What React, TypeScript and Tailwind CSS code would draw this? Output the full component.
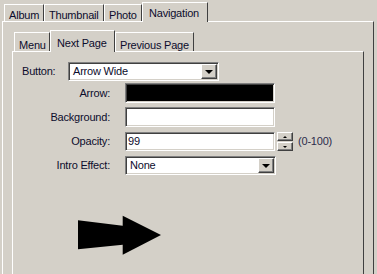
import React from 'react';

const FACE = 'bg-[#d4d0c8]';
const SUNKEN =
  'border border-t-[#808080] border-l-[#808080] border-b-white border-r-white shadow-[inset_1px_1px_0_#404040,inset_-1px_-1px_0_#d4d0c8]';
const RAISED =
  'border border-t-white border-l-white border-b-[#404040] border-r-[#404040] shadow-[inset_-1px_-1px_0_#808080]';

function DownTriangle() {
  return <div className="h-0 w-0 border-x-[4px] border-t-[4px] border-x-transparent border-t-black" />;
}

function Tab({ label, w, selected, big }: { label: string; w: number; selected?: boolean; big?: boolean }) {
  if (selected) {
    return (
      <div
        className={`relative z-10 -mb-px flex items-start border-l border-t border-r border-l-white border-t-white border-r-[#404040] ${FACE} ${
          big ? 'h-[20px] pt-[4px]' : 'h-[22px] pt-[6px]'
        } pl-[6px]`}
        style={{ width: w }}
      >
        {label}
      </div>
    );
  }
  return (
    <div
      className={`flex items-start border-l border-t border-r border-l-white border-t-white border-r-[#404040] ${
        big ? 'h-[17px] pt-[4px]' : 'h-[19px] pt-[6px]'
      } pl-[4px]`}
      style={{ width: w }}
    >
      {label}
    </div>
  );
}

function Dropdown({ value, w }: { value: string; w: number }) {
  return (
    <div className={`flex h-[19px] items-center bg-white ${SUNKEN} p-[1px]`} style={{ width: w }}>
      <span className="flex-1 pl-[3px]">{value}</span>
      <div className={`flex h-[15px] w-[16px] items-center justify-center ${FACE} ${RAISED}`}>
        <DownTriangle />
      </div>
    </div>
  );
}

export default function App() {
  return (
    <div
      className={`flex h-[274px] w-[377px] flex-col overflow-hidden ${FACE} text-[11px] leading-[13px] tracking-[-0.2px] text-[#0c0c2c]`}
      style={{ fontFamily: '"Liberation Sans", Arial, sans-serif' }}
    >
      {/* outer tabs */}
      <div className="flex h-[21px] items-end pl-[4px]">
        <Tab big label="Album" w={40} />
        <Tab big label="Thumbnail" w={60} />
        <Tab big label="Photo" w={38} />
        <Tab big selected label="Navigation" w={66} />
      </div>

      <div className="ml-[2px] flex w-[372px] flex-1 flex-col border-l border-t border-r border-l-white border-t-white border-r-[#404040] pl-[9px] pt-[8px]">
        {/* inner tabs */}
        <div className="flex h-[21px] items-end pl-[2px]">
          <Tab label="Menu" w={36} />
          <Tab selected label="Next Page" w={65} />
          <Tab label="Previous Page" w={79} />
        </div>

        <div className="flex w-[352px] flex-1 flex-col border-l border-t border-r border-l-white border-t-white border-r-[#404040] pl-[9px] pt-[10px]">
          <div className="flex items-center">
            <span className="w-[46px]">Button:</span>
            <Dropdown value="Arrow Wide" w={151} />
          </div>

          <div className="mt-[2px] flex items-center">
            <span className="w-[88px] text-right">Arrow:</span>
            <div className={`ml-[15px] h-[20px] w-[150px] bg-black ${SUNKEN}`} />
          </div>

          <div className="mt-[4px] flex items-center">
            <span className="w-[88px] text-right">Background:</span>
            <div className={`ml-[15px] h-[20px] w-[150px] bg-white ${SUNKEN}`} />
          </div>

          <div className="mt-[5px] flex items-center">
            <span className="w-[88px] text-right">Opacity:</span>
            <div className={`ml-[15px] flex h-[19px] w-[150px] items-center bg-white pl-[2px] ${SUNKEN}`}>99</div>
            <div className="ml-[2px] flex h-[19px] w-[16px] flex-col">
              <div className={`flex h-[9px] items-center justify-center ${FACE} ${RAISED}`}>
                <div className="h-0 w-0 border-x-[2px] border-b-[2px] border-x-transparent border-b-black" />
              </div>
              <div className={`mt-px flex h-[9px] items-center justify-center ${FACE} ${RAISED}`}>
                <div className="h-0 w-0 border-x-[2px] border-t-[2px] border-x-transparent border-t-black" />
              </div>
            </div>
            <span className="ml-[5px] text-[#2c2c4c]">(0-100)</span>
          </div>

          <div className="mt-[5px] flex items-center">
            <span className="w-[88px] text-right">Intro Effect:</span>
            <div className="ml-[15px]">
              <Dropdown value="None" w={151} />
            </div>
          </div>

          <svg className="ml-[56px] mt-[40px]" width="84" height="41" viewBox="0 0 84 41">
            <polygon points="0,5.3 44.7,10.7 44.7,0.7 83,20 44.7,39.7 44.7,29.7 0,34.3" fill="#000" />
          </svg>
        </div>
      </div>
    </div>
  );
}
